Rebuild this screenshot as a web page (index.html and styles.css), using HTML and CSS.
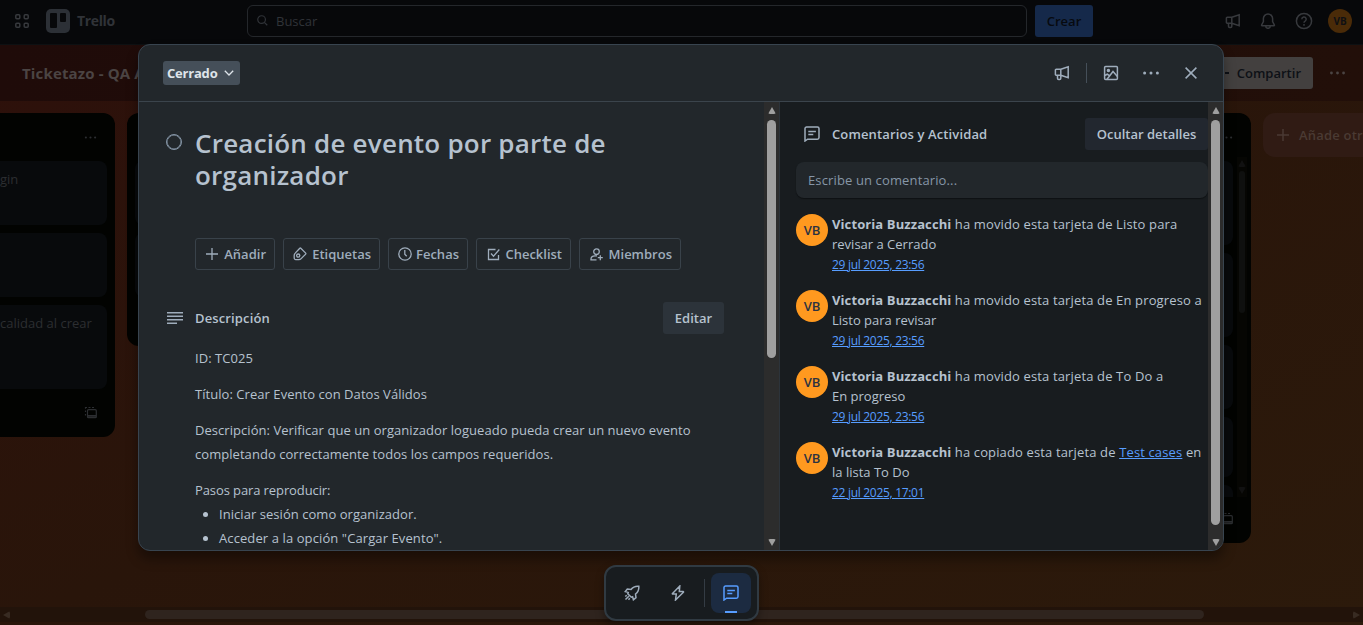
FILE: index.html
```html
<!DOCTYPE html>
<html lang="es">
<head>
<meta charset="utf-8">
<title>Ticketazo - Trello</title>
<link rel="stylesheet" href="styles.css">
</head>
<body>
<svg width="0" height="0" class="defs">
  <symbol id="megaphone" viewBox="0 0 16 16"><path d="M6.800 4.300 14.200 1.700v11.100L6.800 10.300M6.800 4.300v6M6.800 4.300H2.200a.8.8 0 0 0-.8.8v4.400a.8.8 0 0 0 .8.800h4.600M3.500 10.300v3a1.200 1.200 0 0 0 1.200 1.200h.900a1.200 1.200 0 0 0 1.200-1.200v-3"/></symbol>
  <symbol id="dots" viewBox="0 0 18 6"><g fill="currentColor" stroke="none"><circle cx="2.600" cy="3" r="1.500"/><circle cx="9" cy="3" r="1.500"/><circle cx="15.400" cy="3" r="1.500"/></g></symbol>
  <symbol id="comment" viewBox="0 0 16 16"><path d="M1 15V2.600A1.600 1.600 0 0 1 2.600 1h10.800A1.600 1.600 0 0 1 15 2.600v9a1.600 1.600 0 0 1-1.600 1.600H3.600zM4.300 5.600h7.600M4.300 8.600h5"/></symbol>
  <symbol id="template" viewBox="0 0 14 14"><path d="M1.500 9.500V8M1.500 6V4.500M1.500 2.700V1.500h1.500M4.500 1.500h2M8 1.500h2"/><rect x="3.500" y="3.700" width="8.800" height="8" rx="1"/><path d="M3.500 9.500h8.800M3.500 10.800h8.800"/></symbol>
  <symbol id="plus" viewBox="0 0 12 12"><path d="M6 0v12M0 6h12"/></symbol>
</svg>

<div class="app">
  <header class="topbar">
    <svg class="icon grid-icon" viewBox="0 0 14 14"><rect x=".8" y=".8" width="4" height="4" rx="1"/><rect x="9.200" y=".8" width="4" height="4" rx="1"/><rect x=".8" y="9.200" width="4" height="4" rx="1"/><rect x="9.200" y="9.200" width="4" height="4" rx="1"/></svg>
    <div class="logo"><i class="bar-tall"></i><i class="bar-short"></i></div>
    <span class="brand">Trello</span>
    <div class="search">
      <svg class="icon" width="11" height="11" viewBox="0 0 12 12"><circle cx="5" cy="5" r="4.200"/><path d="m8 8 3.200 3.200"/></svg>
      <span>Buscar</span>
    </div>
    <div class="create">Crear</div>
    <div class="top-icons">
      <svg class="icon" width="16" height="16"><use href="#megaphone"/></svg>
      <svg class="icon" width="16" height="16" viewBox="0 0 16 16"><path d="M8 1a4.600 4.600 0 0 0-4.600 4.600v3L1.600 12a.5.5 0 0 0 .4.700h12a.5.5 0 0 0 .4-.7l-1.800-3.400v-3A4.600 4.600 0 0 0 8 1zM5.700 13a2.300 2.300 0 0 0 4.600 0"/></svg>
      <svg class="icon" width="18" height="18" viewBox="0 0 18 18"><circle cx="9" cy="9" r="7.600"/><path d="M6.800 7.200a2.200 2.200 0 1 1 3.300 1.900c-.8.400-1.100.8-1.100 1.700M9 12v1.700"/></svg>
      <div class="avatar avatar-dim">VB</div>
    </div>
  </header>
  <div class="boardbar">
    <span class="board-title">Ticketazo - QA A</span>
    <div class="share"><i class="share-mark"></i>Compartir</div>
    <svg class="icon" width="17" height="6"><use href="#dots"/></svg>
  </div>
  <main class="board">
    <section class="list list-first">
      <div class="list-head"><svg class="icon" width="13" height="5"><use href="#dots"/></svg></div>
      <div class="card card-a">gin</div>
      <div class="card card-a"></div>
      <div class="card card-b">calidad al crear</div>
      <div class="list-foot"><svg class="icon" width="14" height="14"><use href="#template"/></svg></div>
    </section>
    <section class="list list-mid"><div class="list-head"></div><div class="card card-a"></div><div class="card card-a"></div></section>
    <section class="list list-mid"></section>
    <section class="list list-mid"></section>
    <section class="list list-last">
      <div class="list-head"><svg class="icon" width="13" height="5"><use href="#dots"/></svg></div>
      <div class="list-scroll">
        <div class="stack"><div class="card card-b"></div><div class="card card-b"></div><div class="card card-a"></div><div class="card card-c"></div><div class="card card-a"></div></div>
        <div class="thin-bar"><i class="arrow up"></i><i class="thumb"></i><i class="arrow down"></i></div>
      </div>
      <div class="list-foot"><svg class="icon" width="14" height="14"><use href="#template"/></svg></div>
    </section>
    <div class="add-list"><svg class="icon" width="12" height="12"><use href="#plus"/></svg><span>Añade otra lista</span></div>
  </main>
  <div class="hbar"><i class="arrow left"></i><i class="thumb"></i><i class="arrow right"></i></div>
</div>

<div class="modal">
  <div class="modal-head">
    <div class="status">Cerrado<svg class="icon" width="10" height="6" viewBox="0 0 10 6"><path d="m.8.8 4.200 4.200L9.200.8"/></svg></div>
    <div class="modal-actions">
      <svg class="icon" width="16" height="16"><use href="#megaphone"/></svg>
      <i class="vline"></i>
      <svg class="icon" width="16" height="16" viewBox="0 0 16 16"><rect x="1.600" y="1.600" width="12.800" height="12.800" rx="1"/><circle cx="5.400" cy="5.400" r="1" fill="currentColor"/><path d="m4 14.200 6-7.700 4.400 5M1.600 10.500l2.700-1.300 2 1.500"/></svg>
      <svg class="icon" width="18" height="6"><use href="#dots"/></svg>
      <svg class="icon" width="12" height="12" viewBox="0 0 12 12"><path d="m.6.6 10.800 10.800M11.400.6.6 11.400"/></svg>
    </div>
  </div>
  <div class="modal-body">
    <div class="main-col">
      <div class="title-row">
        <i class="check"></i>
        <h1>Creación de evento por parte de<br>organizador</h1>
      </div>
      <div class="chips">
        <div class="chip c1"><svg class="icon" width="12" height="12"><use href="#plus"/></svg><span>Añadir</span></div>
        <div class="chip c2"><svg class="icon" width="14" height="14" viewBox="0 0 14 14"><path d="m7.800 1.200 4.900 4.900a.7.7 0 0 1 0 1l-4.500 4.500a3.400 3.400 0 0 1-2.400 1H2.700A1.500 1.500 0 0 1 1.200 11.100V8.500a3.400 3.400 0 0 1 1-2.400L6.800 1.200a.7.7 0 0 1 1 0z"/><circle cx="5.200" cy="8.600" r="1.600"/></svg><span>Etiquetas</span></div>
        <div class="chip c3"><svg class="icon" width="14" height="14" viewBox="0 0 14 14"><circle cx="7" cy="7" r="6.200"/><path d="M6.800 3v4.200l1.900 2"/></svg><span>Fechas</span></div>
        <div class="chip c4"><svg class="icon" width="13" height="13" viewBox="0 0 13 13"><path d="M8.500 1.500H1.500v10h10V7M4 5.500l2.500 2.700L12.300 1.500"/></svg><span>Checklist</span></div>
        <div class="chip c5"><svg class="icon" width="13" height="13" viewBox="0 0 13 13"><circle cx="6.500" cy="3.700" r="2.800"/><path d="M6.500 11.900H1v-.8c0-2 1.600-3.200 4-3.200h2M10.300 7.200v5M7.800 9.700h5"/></svg><span>Miembros</span></div>
      </div>
      <div class="desc-head">
        <svg class="icon" width="16" height="12" viewBox="0 0 16 12"><path d="M0 .8h16M0 4.200h16M0 7.700h16M0 11.200h10"/></svg>
        <h2>Descripción</h2>
        <div class="btn edit">Editar</div>
      </div>
      <div class="desc">
        <p>ID: TC025</p>
        <p>Título: Crear Evento con Datos Válidos</p>
        <p>Descripción: Verificar que un organizador logueado pueda crear un nuevo evento<br>completando correctamente todos los campos requeridos.</p>
        <p class="tight">Pasos para reproducir:</p>
        <ul>
          <li>Iniciar sesión como organizador.</li>
          <li class="loose">Acceder a la opción "Cargar Evento".</li>
        </ul>
      </div>
    </div>
    <div class="vbar"><i class="arrow up"></i><i class="thumb thumb-main"></i><i class="arrow down"></i></div>
    <aside class="side-col">
      <div class="side-head">
        <svg class="icon" width="16" height="16"><use href="#comment"/></svg>
        <h2>Comentarios y Actividad</h2>
        <div class="btn hide">Ocultar detalles</div>
      </div>
      <div class="comment-box">Escribe un comentario...</div>
      <div class="event"><div class="avatar">VB</div><div class="event-text"><b>Victoria Buzzacchi</b> <span>ha movido esta tarjeta de Listo para</span><br>revisar a Cerrado<br><a>29 jul 2025, 23:56</a></div></div>
      <div class="event"><div class="avatar">VB</div><div class="event-text"><b>Victoria Buzzacchi</b> <span>ha movido esta tarjeta de En progreso a</span><br>Listo para revisar<br><a>29 jul 2025, 23:56</a></div></div>
      <div class="event"><div class="avatar">VB</div><div class="event-text"><b>Victoria Buzzacchi</b> <span>ha movido esta tarjeta de To Do a</span><br>En progreso<br><a>29 jul 2025, 23:56</a></div></div>
      <div class="event"><div class="avatar">VB</div><div class="event-text"><b>Victoria Buzzacchi</b> <span>ha copiado esta tarjeta de <u>Test cases</u> en</span><br>la lista To Do<br><a>22 jul 2025, 17:01</a></div></div>
    </aside>
    <div class="vbar"><i class="arrow up"></i><i class="thumb thumb-side"></i><i class="arrow down"></i></div>
  </div>
</div>

<nav class="dock">
  <div class="dock-item"><svg class="icon" width="16" height="16" viewBox="0 0 16 16"><path d="M14.800 1.200c-3.600-.3-6 .8-7.800 3.300L3.300 4 1.200 6.600l3 .8-.4 1.300 3.500 3.500 1.300-.4.800 3 2.600-2.100-.5-3.700c2.500-1.800 3.600-4.200 3.300-7.800zM1.300 11.500l1.400-1.300M1.500 14.500l3.300-3.300M4.500 14.700l1.300-1.400"/></svg></div>
  <div class="dock-item"><svg class="icon" width="14" height="16" viewBox="0 0 14 16"><path d="M8.800.9 1.500 8.400a.4.4 0 0 0 .3.700h3.500L4.500 15l7.900-7.700a.4.4 0 0 0-.3-.7H8.300z"/></svg></div>
  <i class="dock-line"></i>
  <div class="dock-item active"><svg class="icon" width="16" height="16"><use href="#comment"/></svg></div>
</nav>
</body>
</html>
```
FILE: styles.css
```css
* { box-sizing: border-box; }
body {
  margin: 0;
  width: 1363px;
  height: 625px;
  overflow: hidden;
  font-family: "Open Sans", "Noto Sans", sans-serif;
  font-size: 13px;
  line-height: 20px;
  color: #b6c2cf;
  background: #2a170b;
}
h1, h2, p, ul { margin: 0; padding: 0; }
i { display: block; flex: none; }
.defs { display: block; position: absolute; }
.icon { flex: none; display: block; fill: none; stroke: currentColor; stroke-width: 1.500; }

.app {
  height: 625px;
  display: flex;
  flex-direction: column;
  background: linear-gradient(155deg, #2e100b 0%, #29150a 50%, #2c1a0b 100%);
  overflow: hidden;
}
.topbar {
  height: 45px;
  flex: none;
  display: flex;
  align-items: center;
  padding: 0 11px 3px 15px;
  background: #07080a;
  border-bottom: 1px solid #0d1012;
  color: #37393d;
}
.grid-icon { width: 14px; height: 14px; }
.logo {
  width: 24px;
  height: 24px;
  margin-left: 17px;
  padding: 4px;
  display: flex;
  justify-content: space-between;
  border-radius: 5px;
  background: #2c3036;
}
.logo i { width: 6.500px; background: #07080a; border-radius: 1px; }
.logo .bar-tall { height: 15px; }
.logo .bar-short { height: 9px; }
.brand { width: 38px; margin-left: 7px; font-size: 14px; font-weight: 700; letter-spacing: -.35px; white-space: nowrap; color: #303338; }
.search {
  width: 780px;
  height: 32px;
  margin-left: 132px;
  padding-left: 9px;
  display: flex;
  align-items: center;
  gap: 8px;
  border: 1px solid #24272b;
  border-radius: 6px;
  color: #303338;
}
.search .icon { stroke-width: 1.300; }
.search span { padding-top: 1px; }
.create {
  width: 58px;
  height: 32px;
  margin-left: 8px;
  border-radius: 3px;
  background: #15294a;
  color: #070a0f;
  font-weight: 600;
  text-align: center;
  line-height: 32px;
}
.top-icons { margin-left: auto; display: flex; align-items: center; gap: 19px; }
.avatar {
  width: 32px;
  height: 32px;
  flex: none;
  border-radius: 50%;
  background: #ff991f;
  color: #2b3242;
  font-size: 13px;
  font-weight: 600;
  line-height: 32px;
  text-align: center;
}
.avatar-dim { width: 24px; height: 24px; line-height: 24px; font-size: 10px; font-weight: 700; background: #4a2b08; color: #0f1013; margin-left: -4px; }

.boardbar {
  height: 56px;
  flex: none;
  display: flex;
  align-items: center;
  padding: 0 17px 0 22px;
  background: linear-gradient(90deg, #1f0b09, #220f09);
  color: #4b4443;
}
.board-title { font-size: 15px; font-weight: 700; letter-spacing: .15px; color: #4b4443; }
.share {
  width: 111px;
  height: 32px;
  margin-left: auto;
  margin-right: 16px;
  padding-right: 12px;
  display: flex;
  align-items: center;
  justify-content: flex-end;
  gap: 8px;
  border-radius: 3px;
  background: #43403f;
  color: #0d1016;
  font-weight: 600;
}
.share-mark { width: 4px; height: 2px; background: #0d1016; }

.board { flex: 1; display: flex; align-items: flex-start; gap: 12px; padding-top: 12px; min-height: 0; }
.list { flex: none; padding: 0 8px; background: #020301; border-radius: 12px; color: #2c2e31; }
.list-first { width: 115px; height: 324px; padding-left: 0; border-radius: 0 12px 12px 0; }
.list-mid { width: 272px; height: 233px; }
.list-last { width: 272px; height: 430px; padding-right: 4px; }
.list-head { height: 48px; padding-right: 10px; display: flex; align-items: center; justify-content: flex-end; }
.list-last .list-head { padding-right: 14px; }
.card { background: #080a0c; border-radius: 8px; margin-bottom: 8px; padding: 8px 0; white-space: nowrap; }
.list-first .card { border-radius: 0 8px 8px 0; }
.card-a { height: 64px; }
.card-b { height: 84px; }
.card-c { height: 60px; }
.list-foot { padding: 9px 9px 0 0; display: flex; justify-content: flex-end; }
.list-last .list-foot { padding: 15px 13px 0 0; }
.list-foot .icon { stroke-width: 1.200; }
.list-scroll { display: flex; gap: 4px; height: 340px; overflow: hidden; margin-top: -4px; }
.stack { flex: 1; padding-top: 4px; }
.thin-bar { width: 10px; display: flex; flex-direction: column; align-items: center; padding: 3px 0; background: #060603; color: #111; }
.thin-bar .thumb { width: 6px; height: 142px; margin-top: 4px; border-radius: 3px; background: #0f100f; }
.add-list {
  width: 272px;
  height: 44px;
  flex: none;
  padding-left: 14px;
  display: flex;
  align-items: center;
  gap: 10px;
  border-radius: 12px;
  background: #301b14;
  color: #4a3a33;
  font-weight: 600;
  letter-spacing: .2px;
}
.hbar { height: 15px; flex: none; margin-bottom: 3px; display: flex; align-items: center; padding: 0 3px; background: #22130a; color: #382b22; }
.hbar .thumb { width: 1059px; height: 9px; margin-left: 135px; border-radius: 5px; background: #2f241e; }
.hbar .right { margin-left: auto; }

.arrow { border: 4px solid transparent; border-width: 4px 4.500px; border-radius: 2px; width: 0; height: 0; }
.up { border-bottom: 7px solid currentColor; border-top: 0; }
.down { border-top: 7px solid currentColor; border-bottom: 0; margin-top: auto; }
.left { border-width: 4.500px 7px 4.500px 0; border-right-color: currentColor; }
.right { border-width: 4.500px 0 4.500px 7px; border-left-color: currentColor; }

.modal {
  position: absolute;
  left: 138px;
  top: 44px;
  width: 1086px;
  height: 507px;
  display: flex;
  flex-direction: column;
  border: 1px solid #38444f;
  border-radius: 12px;
  background: #22272b;
  overflow: hidden;
  box-shadow: 0 8px 12px rgba(3, 4, 4, .36);
}
.modal-head {
  height: 57px;
  flex: none;
  display: flex;
  align-items: center;
  justify-content: space-between;
  padding: 0 26px 0 24px;
  border-bottom: 1px solid #3b444c;
  color: #9fadbc;
}
.status {
  width: 77px;
  height: 24px;
  padding: 0 6px 0 4px;
  display: flex;
  align-items: center;
  justify-content: space-between;
  border-radius: 3px;
  background: #454f59;
  color: #dee4ea;
  font-weight: 700;
  letter-spacing: -.2px;
}
.status .icon { stroke-width: 1.300; }
.modal-actions { display: flex; align-items: center; }
.vline { width: 1px; height: 20px; margin: 0 16px; background: #454f59; }
.modal-actions .icon:nth-child(3) { margin-right: 23px; }
.modal-actions .icon:nth-child(4) { margin-right: 25px; }
.modal-body { flex: 1; display: flex; min-height: 0; }
.main-col { width: 625px; flex: none; padding: 25px 40px 0 27px; overflow: hidden; }
.title-row { display: flex; }
.check { width: 16px; height: 16px; margin-top: 7px; border: 1.500px solid #8696a7; border-radius: 50%; box-shadow: inset 0 0 0 .5px #8696a7; }
h1 { margin-left: 13px; font-size: 26px; line-height: 32px; font-weight: 600; white-space: nowrap; letter-spacing: .22px; }
.chips { display: flex; gap: 8px; margin: 47px 0 0 29px; }
.chip {
  height: 32px;
  display: flex;
  align-items: center;
  justify-content: space-between;
  padding: 0 8px 0 10px;
  border: 1px solid #39424a;
  border-radius: 3px;
  color: #9fadbc;
  font-weight: 600;
  white-space: nowrap;
}
.chip .icon { stroke-width: 1.300; }
.c1 { width: 80px; }
.c2 { width: 97px; padding-left: 9px; }
.c3 { width: 80px; padding-left: 9px; }
.c4 { width: 95px; }
.c5 { width: 102px; }
h2 { font-size: 13px; line-height: 20px; font-weight: 600; white-space: nowrap; letter-spacing: .13px; }
.desc-head { display: flex; align-items: center; margin-top: 32px; color: #9fadbc; margin-left: 1px; }
.desc-head h2, .side-head h2 { margin-left: 12px; color: #b6c2cf; }
.btn { height: 32px; margin-left: auto; padding: 0; border-radius: 3px; background: #2c333a; font-weight: 600; line-height: 32px; text-align: center; color: #b6c2cf; white-space: nowrap; }
.edit { width: 61px; }
.desc { margin: 12px 0 0 29px; line-height: 24px; white-space: nowrap; letter-spacing: .05px; }
.desc p { margin-bottom: 12px; }
.desc p:last-of-type { margin-bottom: 0; }
.desc ul { padding-left: 24px; }
.desc .tight { letter-spacing: -.1px; }
.desc .loose { letter-spacing: .1px; }

.vbar { width: 15px; flex: none; padding: 5px 0 4px; display: flex; flex-direction: column; align-items: center; background: #2c2c2c; color: #9f9f9f; }
.vbar .thumb { width: 9px; margin-top: 6px; border-radius: 5px; background: #9f9f9f; }
.vbar .thumb-main { height: 238px; }
.vbar .thumb-side { height: 405px; }
.side-col { width: 429px; flex: none; padding: 16px 0 0 16px; border-left: 1px solid #2c333a; background: #181c1f; overflow: hidden; }
.side-head { display: flex; align-items: center; padding-left: 8px; color: #9fadbc; }
.hide { width: 123px; background: #22272f; }
.comment-box { height: 36px; margin: 12px 0 16px; padding: 0 12px; line-height: 36px; border-radius: 8px; background: #22272b; box-shadow: 0 1px 1px #0e1113; color: #8696a7; font-weight: 500; letter-spacing: .13px; }
.event { display: flex; align-items: flex-start; gap: 4px; height: 76px; white-space: nowrap; }
.event .event-text { color: #b6c2cf; }
b { font-weight: 700; letter-spacing: .1px; }
.event span { letter-spacing: .14px; }
.event a { font-size: 12px; letter-spacing: -.3px; color: #579dff; text-decoration: underline; }
.event u { color: #579dff; }

.dock {
  position: absolute;
  left: 604px;
  top: 565px;
  width: 155px;
  height: 56px;
  padding: 0 6px;
  display: flex;
  align-items: center;
  border: 2px solid #303a42;
  border-radius: 12px;
  background: #181c1f;
  color: #9fadbc;
  box-shadow: 0 4px 8px rgba(0, 0, 0, .35);
}
.dock-item { width: 40px; height: 40px; display: flex; align-items: center; justify-content: center; border-radius: 8px; }
.dock-item + .dock-item { margin-left: 6px; }
.dock-line { width: 1px; height: 28px; margin: 0 6px; background: #343c44; }
.dock-item.active { position: relative; background: #1c2b41; color: #579dff; }
.dock-item.active::after { content: ""; position: absolute; left: 14px; bottom: 0; width: 12px; height: 2px; background: #579dff; }
```
